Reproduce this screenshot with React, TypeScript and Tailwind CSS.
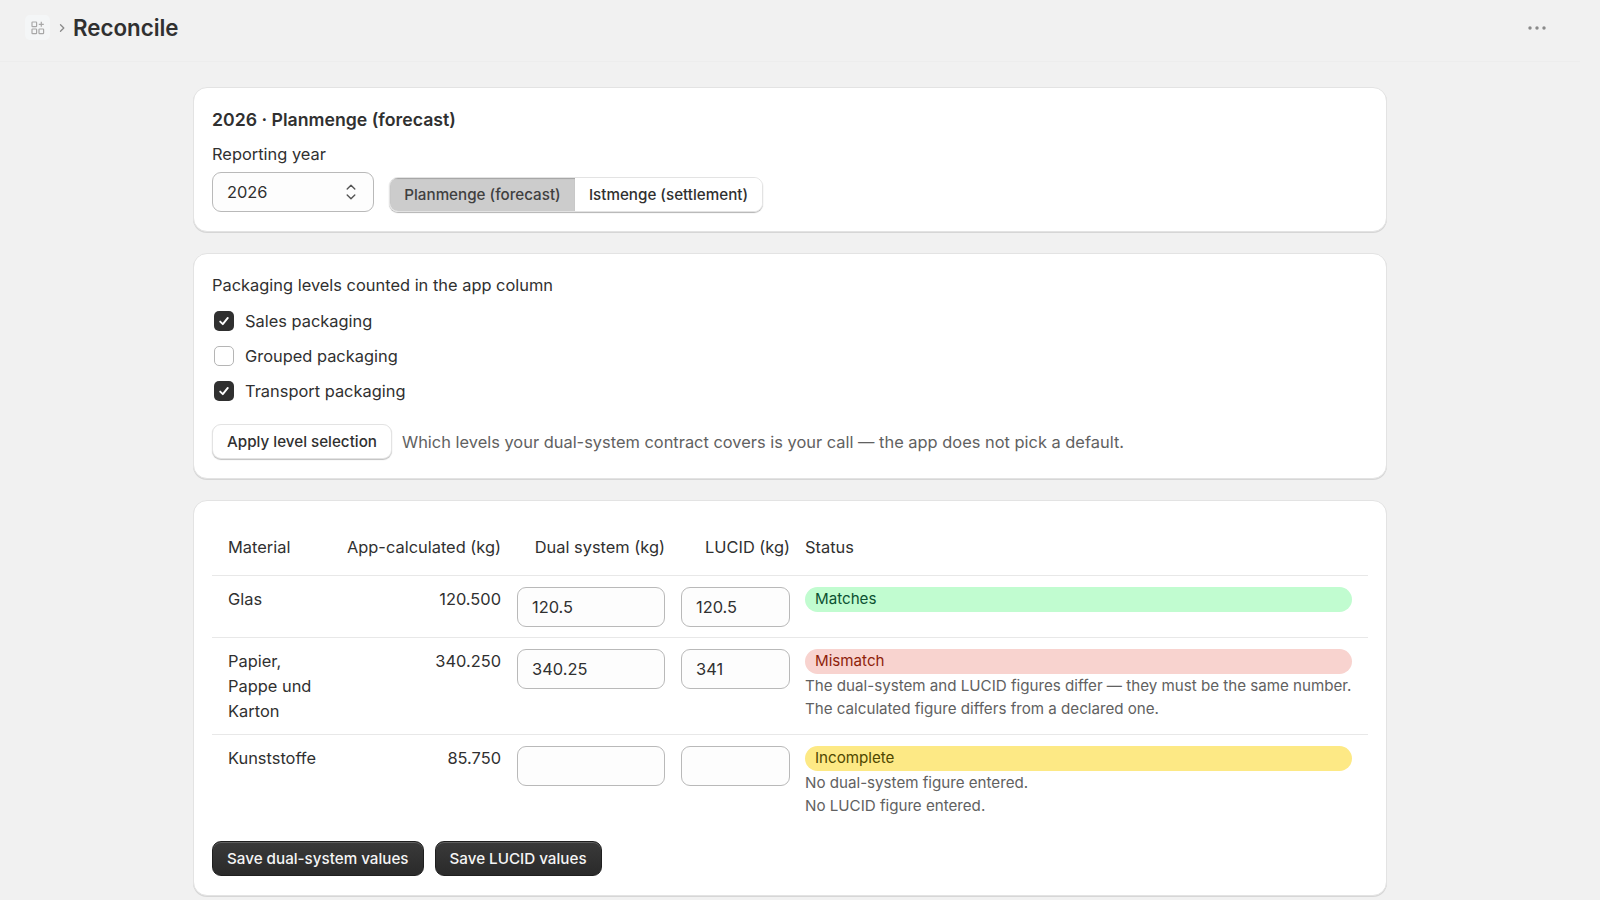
import React from "react";

const cardCls = "bg-white rounded-[14px] border border-[#e3e3e3] shadow-[0_1px_0_0_rgba(26,26,26,0.12)]";
const secondaryBtn = "bg-white rounded-[9px] border border-[#e3e3e3] shadow-[0_1px_1px_0_rgba(0,0,0,0.25)] font-medium text-[#303030] text-[15.2px] leading-[20px]";
const primaryBtn = "h-[35px] px-[14px] rounded-[9px] bg-gradient-to-b from-[#3a3a3a] to-[#2a2a2a] border border-[#1f1f1f] shadow-[inset_0_1px_0_0_rgba(255,255,255,0.2)] font-medium text-[#f5f5f5] text-[15.2px] leading-[20px]";

function Check({ checked, label }: { checked: boolean; label: string }) {
  return (
    <div className="flex items-center h-[35px]">
      <span className={"ml-[2px] w-5 h-5 rounded-[5px] flex items-center justify-center " + (checked ? "bg-[#303030]" : "bg-white border border-[#b5b5b5]")}>
        {checked && (
          <svg width="14" height="14" viewBox="0 0 14 14" fill="none" stroke="#fff" strokeWidth="1.9" strokeLinecap="round" strokeLinejoin="round">
            <path d="M3.2 7.6 5.8 10.2 10.8 3.9" />
          </svg>
        )}
      </span>
      <span className="ml-[11px]">{label}</span>
    </div>
  );
}

function Field({ value, w }: { value: string; w: string }) {
  return (
    <div className={w + " h-10 rounded-[9px] border border-[#b9b9b9] bg-[#fdfdfd] flex items-center px-[14px] text-[#303030]"}>{value}</div>
  );
}

function Badge({ text, cls }: { text: string; cls: string }) {
  return <div className={"h-[25px] rounded-full px-[10px] text-[15.15px] leading-[24px] " + cls}>{text}</div>;
}

function Note({ children }: { children: React.ReactNode }) {
  return <div className="text-[15.15px] leading-[23px] whitespace-nowrap text-[#616161]">{children}</div>;
}

function Row({ name, app, dual, lucid, children, h }: { name: React.ReactNode; app: string; dual: string; lucid: string; children: React.ReactNode; h: string }) {
  return (
    <tr className="border-t border-[#e8e8e8] align-top">
      <td className={"pl-[16px] pr-[15px] pt-[11px] leading-[25px] " + h}>{name}</td>
      <td className="pr-[16px] pt-[11px] text-right leading-[25px]">{app}</td>
      <td className="pr-[15px] pt-[11px]"><Field value={dual} w="w-[148px]" /></td>
      <td className="pr-[15px] pt-[11px]"><Field value={lucid} w="w-[109px]" /></td>
      <td className="pr-[16px] pt-[11px]">{children}</td>
    </tr>
  );
}

export default function App() {
  return (
    <div className="min-h-[900px] h-[900px] overflow-hidden bg-[#f1f1f1] text-[#303030] text-[16.42px] leading-[24px]" style={{ fontFamily: "Inter, 'Noto Sans', sans-serif" }}>
      <header className="h-[62px] pb-[6px] border-b border-[#ededed] flex items-center pl-[25px] pr-[33px] mr-[20px]">
        <div className="w-[25px] h-[25px] rounded-[5px] bg-[#f4f6f7] flex items-center justify-center">
          <svg width="14" height="14" viewBox="0 0 14 14" fill="none" stroke="#a8a8a8" strokeWidth="1.2">
            <rect x="1" y="1" width="4.6" height="4.6" rx="0.6" />
            <rect x="1" y="8" width="4.6" height="4.6" rx="0.6" />
            <rect x="8" y="8" width="4.6" height="4.6" rx="0.6" />
            <path d="M10.3 0.8v5M7.8 3.3h5" />
          </svg>
        </div>
        <svg className="ml-[6px]" width="12" height="12" viewBox="0 0 12 12" fill="none" stroke="#8a8a8a" strokeWidth="1.3" strokeLinecap="round" strokeLinejoin="round">
          <path d="M4.5 2.7 7.8 6 4.5 9.3" />
        </svg>
        <h1 className="ml-[5px] text-[22.3px] leading-[28px] font-semibold text-[#303030]">Reconcile</h1>
        <svg className="ml-auto" width="20" height="6" viewBox="0 0 20 6" fill="#8a8a8a">
          <circle cx="3" cy="3" r="1.7" />
          <circle cx="10" cy="3" r="1.7" />
          <circle cx="17" cy="3" r="1.7" />
        </svg>
      </header>

      <main className="w-[1194px] ml-[193px] pt-[25px] flex flex-col gap-[21px]">
        <section className={cardCls + " h-[145px] px-[18px] pt-[19px]"}>
          <h2 className="font-semibold text-[17.7px] leading-[26px]">2026 · Planmenge (forecast)</h2>
          <div className="mt-[9px] leading-[24px]">Reporting year</div>
          <div className="mt-[6px] flex items-end gap-[15px]">
            <div className="w-[162px] h-10 rounded-[9px] border border-[#b9b9b9] bg-[#fdfdfd] flex items-center justify-between pl-[14px] pr-[15px]">
              <span>2026</span>
              <svg width="14" height="20" viewBox="0 0 14 20" fill="none" stroke="#555" strokeWidth="1.4" strokeLinecap="round" strokeLinejoin="round">
                <path d="M3.2 7 7 3.2 10.8 7M3.2 13 7 16.8 10.8 13" />
              </svg>
            </div>
            <div className="flex h-[35px] rounded-[9px] overflow-hidden shadow-[0_1px_1px_0_rgba(0,0,0,0.3)] border border-[#e3e3e3]">
              <div className="w-[185px] bg-[#cccccc] shadow-[inset_0_1px_1px_rgba(0,0,0,0.2)] flex items-center justify-center font-medium text-[15.2px] text-[#404040]">Planmenge (forecast)</div>
              <div className="w-[187px] bg-white flex items-center justify-center font-medium text-[15.2px]">Istmenge (settlement)</div>
            </div>
          </div>
        </section>

        <section className={cardCls + " h-[226px] px-[18px] pt-[19px]"}>
          <div className="leading-[24px]">Packaging levels counted in the app column</div>
          <div className="mt-[6px]">
            <Check checked label="Sales packaging" />
            <Check checked={false} label="Grouped packaging" />
            <Check checked label="Transport packaging" />
          </div>
          <div className="mt-[16px] flex items-center">
            <button className={secondaryBtn + " h-[35px] w-[180px]"}>Apply level selection</button>
            <span className="ml-[10px] text-[#616161]">Which levels your dual-system contract covers is your call — the app does not pick a default.</span>
          </div>
        </section>

        <section className={cardCls + " h-[396px] px-[18px] pt-[19px]"}>
          <table className="w-[1156px] table-fixed border-collapse">
            <colgroup>
              <col className="w-[120px]" />
              <col className="w-[185px]" />
              <col className="w-[164px]" />
              <col className="w-[124px]" />
              <col />
            </colgroup>
            <thead>
              <tr className="h-[55px]">
                <th className="pl-[16px] text-left font-normal">Material</th>
                <th className="pr-[16px] text-right font-normal whitespace-nowrap">App-calculated (kg)</th>
                <th className="pr-[16px] text-right font-normal whitespace-nowrap">Dual system (kg)</th>
                <th className="pr-[15px] text-right font-normal whitespace-nowrap">LUCID (kg)</th>
                <th className="text-left font-normal">Status</th>
              </tr>
            </thead>
            <tbody>
              <Row name="Glas" app="120.500" dual="120.5" lucid="120.5" h="h-[62px]">
                <Badge text="Matches" cls="bg-[#c1fcd0] text-[#0c5132]" />
              </Row>
              <Row name={<>Papier,<br />Pappe und<br />Karton</>} app="340.250" dual="340.25" lucid="341" h="h-[97px]">
                <Badge text="Mismatch" cls="bg-[#f8d3cf] text-[#8e1f0b]" />
                <Note>The dual-system and LUCID figures differ — they must be the same number.</Note>
                <Note>The calculated figure differs from a declared one.</Note>
              </Row>
              <Row name="Kunststoffe" app="85.750" dual="" lucid="" h="h-[92px]">
                <Badge text="Incomplete" cls="bg-[#fde985] text-[#4f4700]" />
                <Note>No dual-system figure entered.</Note>
                <Note>No LUCID figure entered.</Note>
              </Row>
            </tbody>
          </table>
          <div className="mt-[15px] flex gap-[11px]">
            <button className={primaryBtn}>Save dual-system values</button>
            <button className={primaryBtn}>Save LUCID values</button>
          </div>
        </section>
      </main>
    </div>
  );
}
